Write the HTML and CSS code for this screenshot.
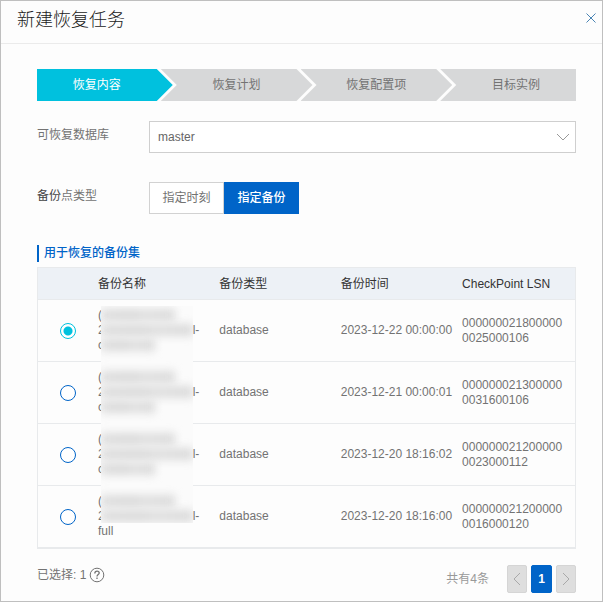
FILE: index.html
```html
<!DOCTYPE html>
<html lang="zh-CN">
<head>
<meta charset="utf-8">
<meta name="viewport" content="width=device-width, initial-scale=1">
<title>新建恢复任务</title>
<link rel="stylesheet" href="styles.css">
</head>
<body>
<main class="dialog">
  <header class="dialog-header">
    <h1>新建恢复任务</h1>
    <button class="close" type="button" aria-label="关闭">
      <svg width="12" height="12" viewBox="0 0 12 12"><path d="M1.5 1.5 10.5 10.5M10.5 1.5 1.5 10.5"/></svg>
    </button>
  </header>
  <form class="dialog-body">
    <ol class="steps">
      <li class="step step-active">恢复内容</li>
      <li class="step">恢复计划</li>
      <li class="step">恢复配置项</li>
      <li class="step step-last">目标实例</li>
    </ol>

    <div class="field">
      <label class="field-label" for="database">可恢复数据库</label>
      <div class="select">
        <select id="database"><option>master</option></select>
        <svg width="14" height="8" viewBox="0 0 14 8"><path d="M1 1 7 7 13 1"/></svg>
      </div>
    </div>

    <div class="field field-type">
      <span class="field-label" id="type-label"><span class="dark">备份</span>点类型</span>
      <div class="segments" role="group" aria-labelledby="type-label">
        <button class="segment" type="button">指定时刻</button>
        <button class="segment segment-active" type="button">指定备份</button>
      </div>
    </div>

    <h2 class="section-title">用于恢复的备份集</h2>
    <div class="table-wrap">
      <table>
        <colgroup><col class="col-pick"><col class="col-data"><col class="col-data"><col class="col-data"><col></colgroup>
        <thead>
          <tr><th></th><th>备份名称</th><th>备份类型</th><th>备份时间</th><th>CheckPoint LSN</th></tr>
        </thead>
        <tbody>
          <tr>
            <td class="pick"><input type="radio" name="backup" aria-label="2023-12-22 00:00:00" checked></td>
            <td><div class="name"><span>(</span><span class="name-mid"><span>2</span><span>l-</span></span><span>c</span></div></td>
            <td>database</td><td class="time">2023-12-22 00:00:00</td><td class="lsn">0000000218000000025000106</td>
          </tr>
          <tr>
            <td class="pick"><input type="radio" name="backup" aria-label="2023-12-21 00:00:01"></td>
            <td><div class="name"><span>(</span><span class="name-mid"><span>2</span><span>l-</span></span><span>c</span></div></td>
            <td>database</td><td class="time">2023-12-21 00:00:01</td><td class="lsn">0000000213000000031600106</td>
          </tr>
          <tr>
            <td class="pick"><input type="radio" name="backup" aria-label="2023-12-20 18:16:02"></td>
            <td><div class="name"><span>(</span><span class="name-mid"><span>2</span><span>l-</span></span><span>c</span></div></td>
            <td>database</td><td class="time">2023-12-20 18:16:02</td><td class="lsn">0000000212000000023000112</td>
          </tr>
          <tr>
            <td class="pick"><input type="radio" name="backup" aria-label="2023-12-20 18:16:00"></td>
            <td><div class="name"><span>(</span><span class="name-mid"><span>2</span><span>l-</span></span><span>full</span></div></td>
            <td>database</td><td class="time">2023-12-20 18:16:00</td><td class="lsn">0000000212000000016000120</td>
          </tr>
        </tbody>
      </table>
      <div class="mask" aria-hidden="true">
        <div class="mask-group"><i class="mid"></i><i></i><i class="short"></i></div>
        <div class="mask-group"><i class="mid"></i><i></i><i class="short"></i></div>
        <div class="mask-group"><i class="mid"></i><i></i><i class="short"></i></div>
        <div class="mask-group"><i class="mid"></i><i></i></div>
      </div>
    </div>

    <footer class="footer">
      <div class="selected">
        <span>已选择: 1</span>
        <svg width="16" height="16" viewBox="0 0 16 16"><circle cx="8" cy="8" r="6.8"/><path stroke-width="1.3" d="M5.8 6.4C5.8 5 6.7 4.2 8 4.2S10.2 5 10.2 6.1C10.2 7.5 8 7.7 8 9.4M8 10.6V12"/></svg>
      </div>
      <nav class="pager" aria-label="分页">
        <span class="total">共有4条</span>
        <button type="button" aria-label="上一页" disabled><svg width="8" height="14" viewBox="0 0 8 14"><path d="M7 1 1 7 7 13"/></svg></button>
        <button class="page-current" type="button">1</button>
        <button type="button" aria-label="下一页" disabled><svg width="8" height="14" viewBox="0 0 8 14"><path d="M1 1 7 7 1 13"/></svg></button>
      </nav>
    </footer>
  </form>
</main>
</body>
</html>
```
FILE: styles.css
```css
* { box-sizing: border-box; }

body {
  margin: 0;
  background: #fdfdfd;
  color: #737373;
  font: 12px/16px "Liberation Sans", "Noto Sans CJK SC", sans-serif;
}

button, select { font: inherit; }
button { padding: 0; cursor: pointer; }
svg { display: block; fill: none; stroke: currentColor; }

.dialog {
  min-height: 100vh;
  border: 1px solid #bfbfbf;
}

.dialog-header {
  display: flex;
  align-items: flex-start;
  justify-content: space-between;
  height: 43px;
  padding: 7px 5px 0 16px;
  border-bottom: 1px solid #ebebeb;
}

h1 {
  margin: 0;
  color: #222;
  font-size: 18px;
  font-weight: 300;
  line-height: 24px;
}

.close {
  margin-top: 4px;
  border: 0;
  background: none;
  color: #4a84b4;
}

.dialog-body { padding: 25px 26px 8px 36px; }

.steps {
  display: grid;
  grid-template-columns: repeat(4, 1fr);
  gap: 20px;
  margin: 0 0 20px;
  padding: 0;
  list-style: none;
}

.step {
  height: 32px;
  margin: 0 -16px;
  background: #d7d8d9;
  line-height: 32px;
  text-align: center;
  clip-path: polygon(0 0, calc(100% - 16px) 0, 100% 50%, calc(100% - 16px) 100%, 0 100%, 16px 50%);
}

.step-active {
  margin-left: 0;
  padding-right: 16px;
  background: #00c1de;
  color: #fff;
  clip-path: polygon(0 0, calc(100% - 16px) 0, 100% 50%, calc(100% - 16px) 100%, 0 100%);
}

.step-last {
  margin-right: 0;
  padding-left: 16px;
  clip-path: polygon(0 0, 100% 0, 100% 100%, 0 100%, 16px 50%);
}

.field {
  display: grid;
  grid-template-columns: 112px 1fr;
}

.field-type { margin-top: 29px; }
.field-label { padding-top: 6px; }
.dark { color: #444; }

.select {
  display: grid;
  align-items: center;
}

.select > * { grid-area: 1 / 1; }

select {
  appearance: none;
  width: 100%;
  height: 32px;
  padding: 0 32px 0 8px;
  border: 1px solid #cfcfcf;
  border-radius: 0;
  background: #fff;
  color: #666;
}

.select svg {
  justify-self: end;
  margin-right: 6px;
  color: #999;
  pointer-events: none;
}

.segments { display: flex; }

.segment {
  width: 75px;
  height: 32px;
  border: 1px solid #d2d2d2;
  background: #fff;
  color: #737373;
}

.segment-active {
  border-color: #0064c8;
  background: #0064c8;
  color: #fff;
  font-weight: 500;
}

.section-title {
  margin: 31px 0 5px;
  padding-left: 5px;
  border-left: 2px solid #0064c8;
  color: #0064c8;
  font-size: 12px;
  font-weight: 500;
  line-height: 17px;
}

.table-wrap { position: relative; }

table {
  width: 100%;
  table-layout: fixed;
  border: 1px solid #e8eaec;
  border-bottom-width: 2px;
  border-spacing: 0;
}

.col-pick { width: 48px; }
.col-data { width: 22.6%; }

th, td {
  padding: 0 12px;
  border-bottom: 1px solid #e8eaec;
  text-align: left;
  vertical-align: middle;
}

th {
  height: 32px;
  padding-right: 0;
  background: #edf1f6;
  color: #333;
  font-weight: 400;
}

td {
  height: 62px;
  line-height: 15px;
}

tbody tr:last-child td {
  height: 61px;
  border-bottom: 0;
}

.pick { padding: 0 0 0 12px; text-align: center; }
.time { padding-right: 0; white-space: nowrap; }
.lsn { padding-right: 10px; word-break: break-all; }

input[type="radio"] {
  display: block;
  appearance: none;
  width: 16px;
  height: 16px;
  margin: 0 auto;
  border: 1px solid #0064c8;
  border-radius: 50%;
  background: #fff;
}

input[type="radio"]:checked {
  border-color: #00c1de;
  background: radial-gradient(circle, #00c1de 4px, #fff 5px);
}

.name { display: flex; flex-direction: column; }
.name-mid { display: flex; justify-content: space-between; margin-right: -4px; }

/* Redaction strip over the backup names */
.mask {
  position: absolute;
  top: 39px;
  left: 64px;
  width: 92px;
  height: 217px;
  overflow: hidden;
  background: #fbfbfb;
}

.mask-group {
  display: flex;
  flex-direction: column;
  gap: 3px;
  height: 62px;
  padding-top: 3px;
}

.mask i {
  height: 12px;
  background: linear-gradient(90deg, #dedede, #d9d9d9 40%, #dfdfdf 60%, #dadada);
  filter: blur(4px);
}

.mask .mid { width: 74px; }
.mask .short { width: 54px; }

.footer {
  display: flex;
  align-items: flex-start;
  justify-content: space-between;
  padding-top: 16px;
}

.selected {
  display: flex;
  align-items: center;
  gap: 3px;
  padding-top: 2px;
}

.pager {
  display: flex;
  align-items: center;
  gap: 4px;
  color: #999;
}

.total { margin-right: 14px; }

.pager button {
  display: grid;
  place-items: center;
  width: 20px;
  height: 28px;
  border: 1px solid #d5d5d5;
  border-radius: 2px;
  background: #dedede;
  color: #a9a9a9;
}

.pager .page-current {
  width: 21px;
  border-color: #0064c8;
  background: #0064c8;
  color: #fff;
  font-weight: 700;
}
```
